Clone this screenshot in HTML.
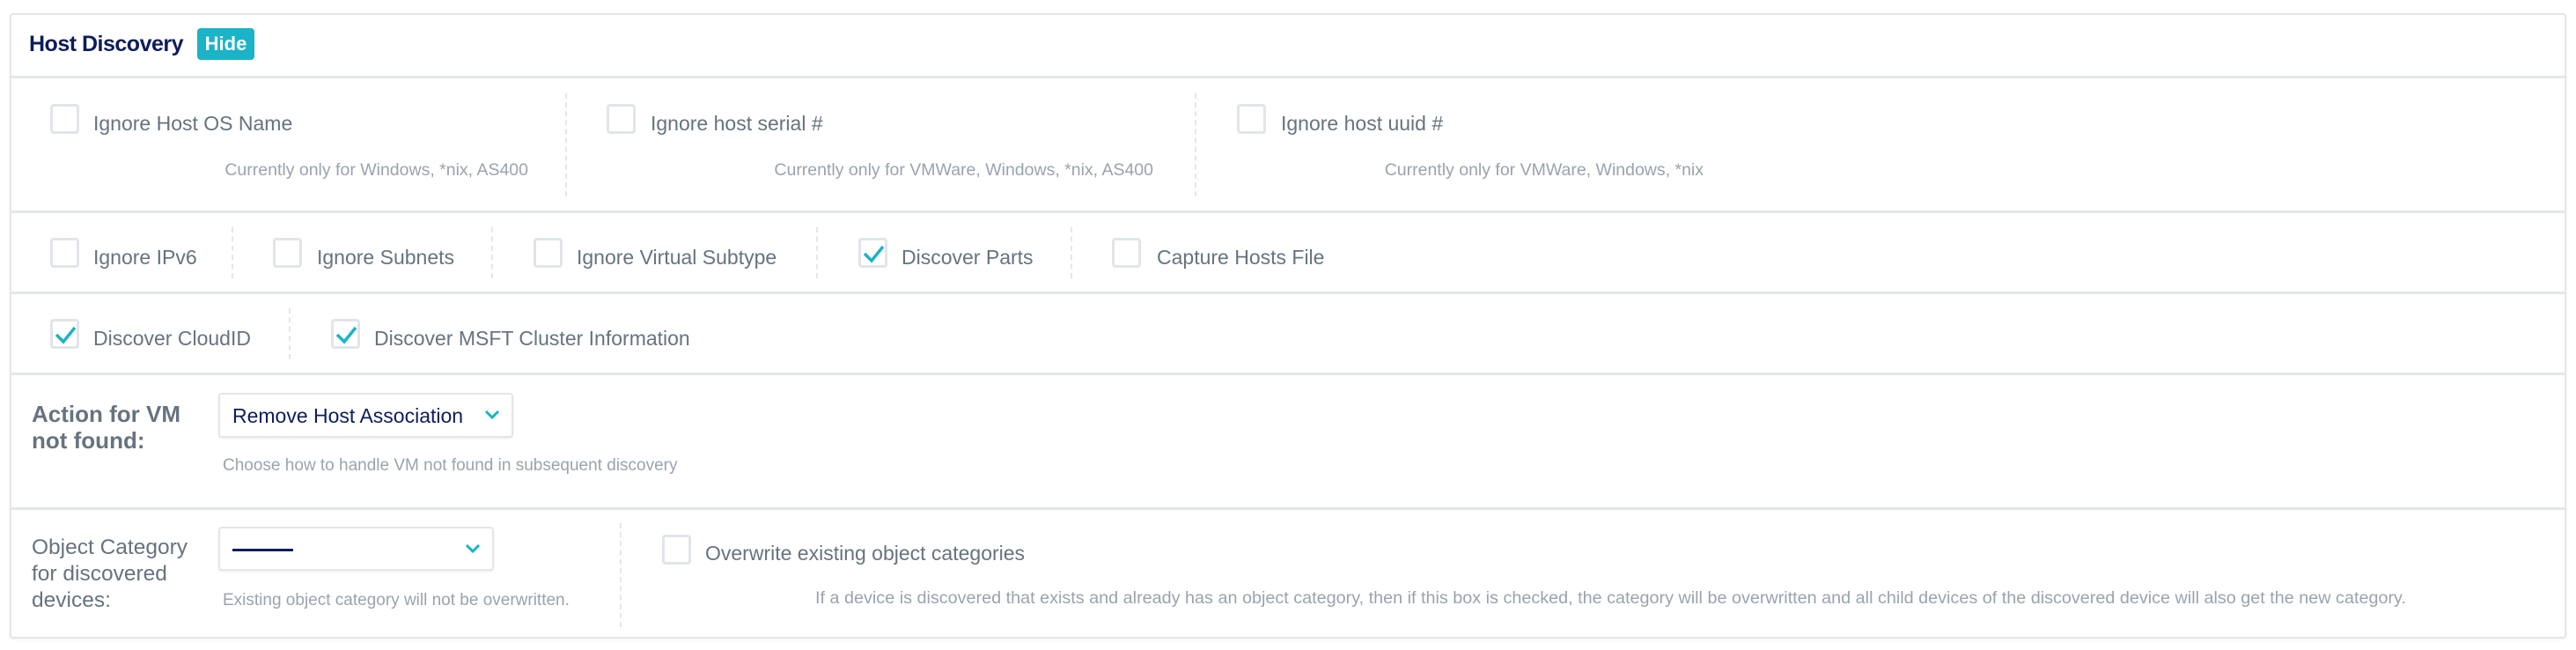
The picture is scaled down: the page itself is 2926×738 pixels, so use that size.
<!DOCTYPE html>
<html><head><meta charset="utf-8"><style>
*{box-sizing:border-box;margin:0;padding:0}
body{width:2926px;height:738px;background:#fff;position:relative;overflow:hidden;font-family:"Liberation Sans",Arial,sans-serif}
.card{position:absolute;left:11px;top:15px;width:2904px;height:710px;border:2px solid #e3e7eb;border-radius:4px;box-shadow:0 1px 3px rgba(0,0,0,.06)}
.a{position:absolute;white-space:nowrap}
.hl{position:absolute;left:11px;width:2904px;height:3px;background:#e3e7eb}
.vs{position:absolute;width:0;border-left:2px dashed #e3e7eb}
.cb{position:absolute;width:33px;height:34px;border:3px solid #e1e5ea;border-radius:4px;background:#fff}
.cb svg{position:absolute;left:1px;top:1px}
.lb{position:absolute;white-space:nowrap;font-size:23px;color:#66737f;line-height:30px}
.hp{position:absolute;white-space:nowrap;font-size:19.5px;color:#9aa3ad;line-height:22px}
.sel{position:absolute;border:2px solid #e3e6ea;border-radius:4px;background:#fff;box-shadow:0 1px 2px rgba(0,0,0,.08)}
</style></head><body>
<div class="card"></div>
<div class="a" style="left:33px;top:35px;font-size:25px;font-weight:bold;color:#0d1d5c;line-height:30px;letter-spacing:-0.5px">Host Discovery</div>
<div class="a" style="left:224px;top:32px;width:65px;height:36px;background:#1ab3c8;border-radius:4px;color:#fff;font-weight:bold;font-size:22px;line-height:36px;text-align:center">Hide</div>
<div class="hl" style="top:86px"></div>
<div class="hl" style="top:239px"></div>
<div class="hl" style="top:331px"></div>
<div class="hl" style="top:423px"></div>
<div class="hl" style="top:576px"></div>

<!-- row1 -->
<div class="cb" style="left:57px;top:118px"></div><div class="lb" style="left:106px;top:125px">Ignore Host OS Name</div>
<div class="hp" style="right:2326px;top:182px">Currently only for Windows, *nix, AS400</div>
<div class="vs" style="left:642px;top:106px;height:117px"></div>
<div class="cb" style="left:689px;top:118px"></div><div class="lb" style="left:739px;top:125px">Ignore host serial #</div>
<div class="hp" style="right:1616px;top:182px">Currently only for VMWare, Windows, *nix, AS400</div>
<div class="vs" style="left:1357px;top:106px;height:117px"></div>
<div class="cb" style="left:1405px;top:118px"></div><div class="lb" style="left:1455px;top:125px">Ignore host uuid #</div>
<div class="hp" style="right:991px;top:182px">Currently only for VMWare, Windows, *nix</div>

<!-- row2 -->
<div class="cb" style="left:57px;top:270px"></div><div class="lb" style="left:106px;top:277px">Ignore IPv6</div>
<div class="vs" style="left:263px;top:258px;height:58px"></div>
<div class="cb" style="left:310px;top:270px"></div><div class="lb" style="left:360px;top:277px">Ignore Subnets</div>
<div class="vs" style="left:558px;top:258px;height:58px"></div>
<div class="cb" style="left:606px;top:270px"></div><div class="lb" style="left:655px;top:277px">Ignore Virtual Subtype</div>
<div class="vs" style="left:927px;top:258px;height:58px"></div>
<div class="cb" style="left:975px;top:270px"><svg width="28" height="28" viewBox="0 0 28 28"><path d="M3 14 L11 22 L24 6" stroke="#1ab3c8" stroke-width="3.5" fill="none"/></svg></div><div class="lb" style="left:1024px;top:277px">Discover Parts</div>
<div class="vs" style="left:1216px;top:258px;height:58px"></div>
<div class="cb" style="left:1263px;top:270px"></div><div class="lb" style="left:1314px;top:277px">Capture Hosts File</div>

<!-- row3 -->
<div class="cb" style="left:57px;top:362px"><svg width="28" height="28" viewBox="0 0 28 28"><path d="M3 14 L11 22 L24 6" stroke="#1ab3c8" stroke-width="3.5" fill="none"/></svg></div><div class="lb" style="left:106px;top:369px">Discover CloudID</div>
<div class="vs" style="left:328px;top:350px;height:58px"></div>
<div class="cb" style="left:376px;top:362px"><svg width="28" height="28" viewBox="0 0 28 28"><path d="M3 14 L11 22 L24 6" stroke="#1ab3c8" stroke-width="3.5" fill="none"/></svg></div><div class="lb" style="left:425px;top:369px">Discover MSFT Cluster Information</div>

<!-- row4 -->
<div class="a" style="left:36px;top:455px;font-size:26px;font-weight:bold;color:#66737f;line-height:30px">Action for VM<br>not found:</div>
<div class="sel" style="left:248px;top:446px;width:335px;height:51px"></div>
<div class="a" style="left:264px;top:457px;font-size:23px;color:#0d1d5c;line-height:30px">Remove Host Association</div>
<svg class="a" style="left:549px;top:464px" width="20" height="14" viewBox="0 0 20 14"><path d="M3 3 L10 10 L17 3" stroke="#1ab3c8" stroke-width="3" fill="none"/></svg>
<div class="hp" style="left:253px;top:518px;font-size:19px">Choose how to handle VM not found in subsequent discovery</div>

<!-- row5 -->
<div class="a" style="left:36px;top:607px;font-size:24.5px;color:#66737f;line-height:30px">Object Category<br>for discovered<br>devices:</div>
<div class="sel" style="left:248px;top:598px;width:313px;height:50px"></div>
<div class="a" style="left:264px;top:623px;width:69px;height:3px;background:#0d1d5c"></div>
<svg class="a" style="left:527px;top:616px" width="20" height="14" viewBox="0 0 20 14"><path d="M3 3 L10 10 L17 3" stroke="#1ab3c8" stroke-width="3" fill="none"/></svg>
<div class="hp" style="left:253px;top:671px;font-size:19px">Existing object category will not be overwritten.</div>
<div class="vs" style="left:704px;top:594px;height:118px"></div>
<div class="cb" style="left:752px;top:607px"></div><div class="lb" style="left:801px;top:613px">Overwrite existing object categories</div>
<div class="hp" style="left:831px;top:668px;width:1997px;text-align:center;font-size:19.8px">If a device is discovered that exists and already has an object category, then if this box is checked, the category will be overwritten and all child devices of the discovered device will also get the new category.</div>
</body></html>
